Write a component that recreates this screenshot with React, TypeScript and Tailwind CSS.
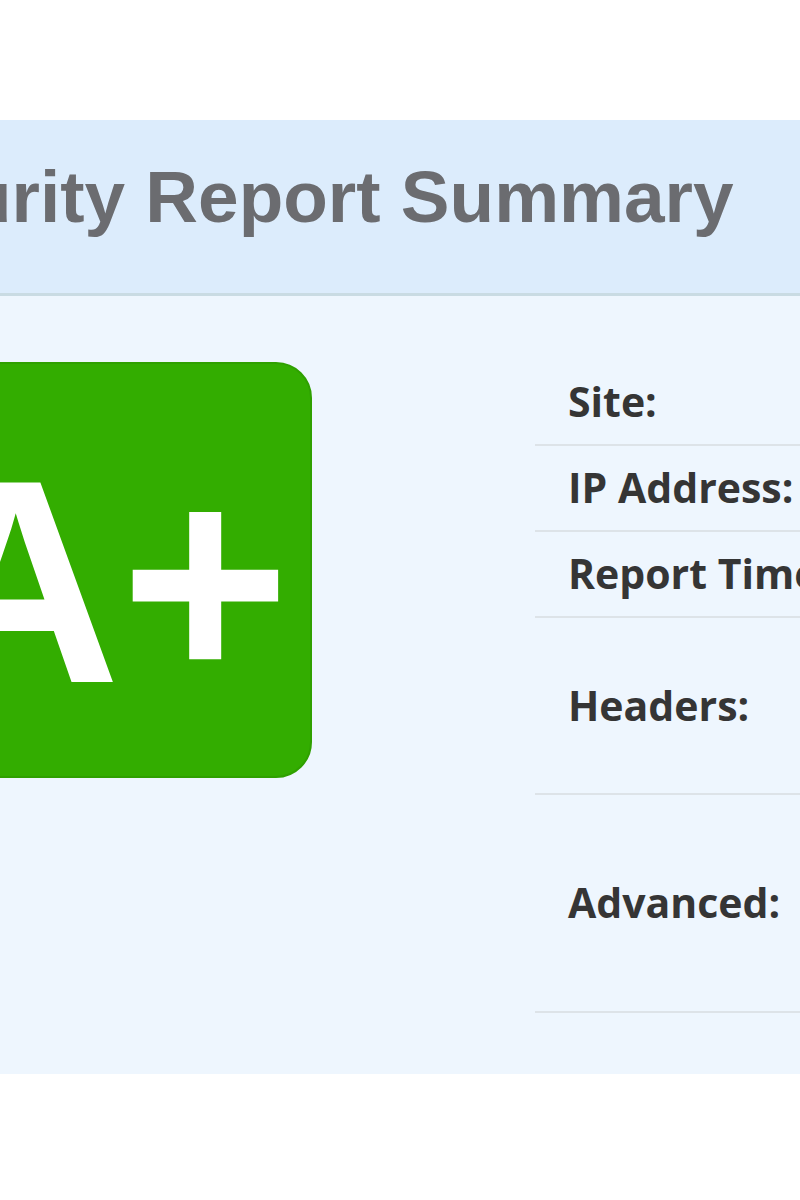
import React from 'react';

const rows = [
  { label: 'Site:', h: 'h-[86px]' },
  { label: 'IP Address:', h: 'h-[86px]' },
  { label: 'Report Time:', h: 'h-[86px]' },
  { label: 'Headers:', h: 'h-[177px]' },
  { label: 'Advanced:', h: 'h-[218px]' },
];

export default function App() {
  return (
    <div className="w-[800px] h-[1200px] overflow-hidden bg-white pt-[120px]">
      {/* Report header band */}
      <div className="h-[176px] bg-[#dcecfc] border-b-[3px] border-[#c9dbe3] pt-[40px]">
        <h1 className="-ml-[163px] whitespace-nowrap text-[73px] leading-none font-bold text-[#6b6c70] font-['Liberation_Sans',Arial,sans-serif]">
          Security Report Summary
        </h1>
      </div>

      {/* Report body */}
      <div className="flex h-[778px] bg-[#eef6fe]">
        <div className="mt-[66px] -ml-[111px] shrink-0">
          <div className="flex h-[416px] w-[423px] justify-center rounded-[36px] border-2 border-[#2fa000] bg-[#33ad00] pt-[72px]">
            <span className="text-[290px] leading-none font-bold text-white font-['Liberation_Sans',Arial,sans-serif]">
              A+
            </span>
          </div>
        </div>

        <div className="ml-[223px] mt-[64px] w-[420px] shrink-0 font-['Open_Sans',sans-serif]">
          {rows.map((row) => (
            <div key={row.label} className={`${row.h} flex items-center border-b-2 border-[#dde3e8] pl-[33px]`}>
              <span className="whitespace-nowrap text-[41px] font-bold text-[#353535]">{row.label}</span>
            </div>
          ))}
        </div>
      </div>
    </div>
  );
}
